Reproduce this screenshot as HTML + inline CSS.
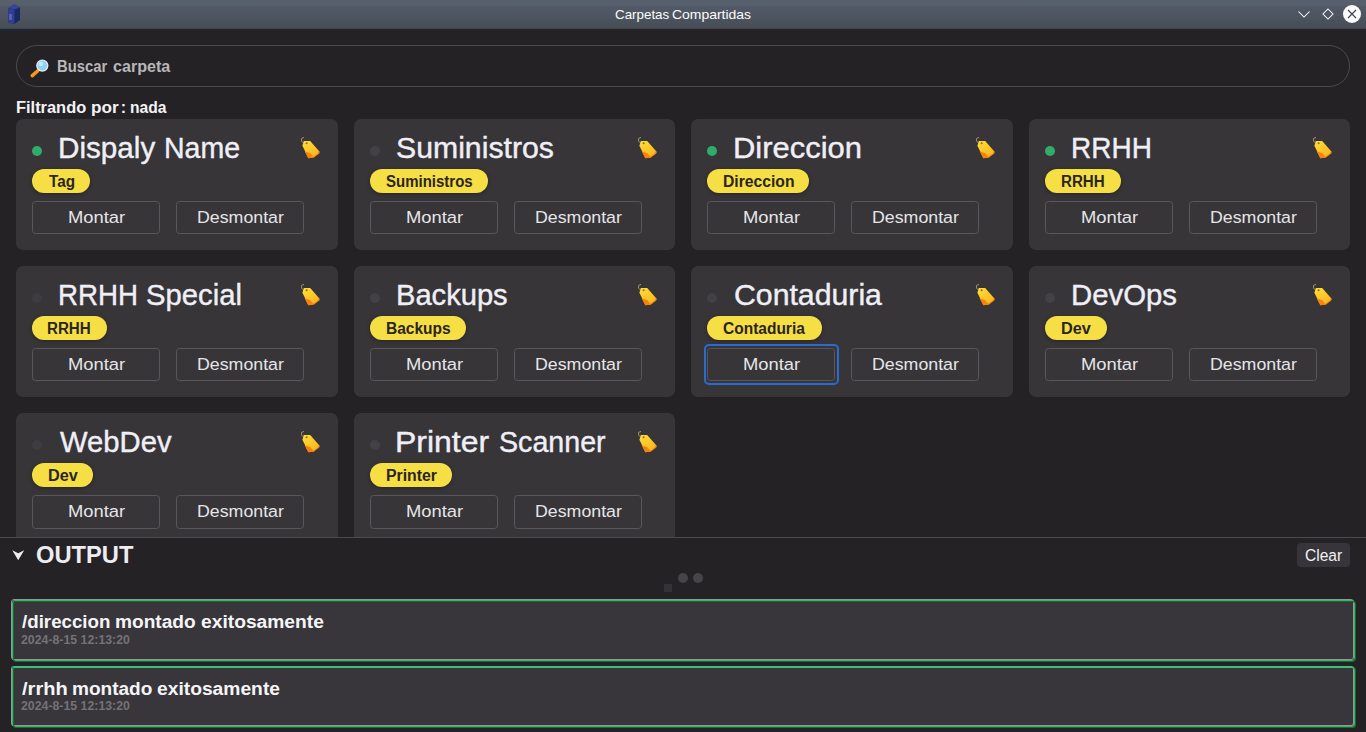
<!DOCTYPE html>
<html lang="es">
<head>
<meta charset="utf-8">
<title>Carpetas Compartidas</title>
<style>
*{box-sizing:border-box;margin:0;padding:0}
html,body{width:1366px;height:732px;overflow:hidden;background:#242225;font-family:"Liberation Sans",sans-serif;color:#f2f2f4}
#win{position:relative;width:1366px;height:732px;overflow:hidden}
.t{position:absolute;white-space:nowrap;display:block;transform-origin:0 0}
#titlebar{position:absolute;left:0;top:0;width:1366px;height:29px;background:linear-gradient(#57616d 0,#565f6b 5px,#525966 7px,#4e5561 17px,#4a515b 21px,#484e58 28px,#4b4c53 28px,#3a3a40 29px)}
#search{position:absolute;left:16px;top:45px;width:1334px;height:42px;border:1px solid #4b494d;border-radius:21px}
.card{position:absolute;width:322px;height:131px;background:#373538;border-radius:7px}
.card .in{position:absolute;top:0;width:322px;height:131px}
.card .dot{position:absolute;left:15.8px;top:26.5px;width:10.3px;height:10.3px;border-radius:50%;background:#434145}
.card .dot.on{background:#2fae6b}
.card .dot.dim{background:#3e3c40}
.card .tag{position:absolute;left:15.7px;top:50.3px;height:24px;border-radius:12px;background:#f5df45;box-shadow:0 1px 4px rgba(0,0,0,.3)}
.card .btn{position:absolute;top:82px;width:128px;height:33px;border:1px solid #59575b;border-radius:3.5px}
.card .btn .t{margin:-1px 0 0 -1px}
.card .b1{left:16px}.card .b2{left:160px}
.card .ring{position:absolute;left:13px;top:78px;width:135px;height:41px;border:2px solid #2a6bd0;border-radius:5px}
.card .ico{position:absolute;right:15px;top:16px;width:24px;height:24px}
#out{position:absolute;left:0;top:537px;width:1366px;height:195px;background:#242225;border-top:1px solid #4c4a4e}
#clear{position:absolute;left:1297px;top:543px;width:53px;height:24px;border-radius:4px;background:#373539}
.msgbg{position:absolute;left:12px;width:1343px;background:#38363a;border-radius:3px}
.mb{position:absolute;width:1343px;border:1px solid;border-radius:3px}
.mb.a{left:11px;border-color:#9b939b}.mb.b{left:12px;border-color:#3db36f}.mb.c{left:13px;border-color:#126e2d}
.sq{position:absolute;left:664px;top:584px;width:8px;height:8px;background:#343236}
.sd{position:absolute;top:573px;width:10px;height:10px;border-radius:50%;background:#464448}
</style>
</head>
<body>
<svg width="0" height="0" style="position:absolute">
<defs>
<linearGradient id="tg" x1="0" y1="0" x2="0.6" y2="1"><stop offset="0" stop-color="#ffdf3a"/><stop offset="1" stop-color="#fbb81e"/></linearGradient>
<g id="tagico">
<polygon points="6.2,15.5 9.3,23.2 14.7,22.7 20.6,18.2 12,14" fill="#f58a12"/>
<polygon points="4.8,6.1 11.2,6.1 20.8,17.1 13.6,22 8.6,21.2 3.4,10.7" fill="url(#tg)"/>
<polygon points="5.6,16.2 9.3,23.2 14.7,22.6 11.4,18.2" fill="#f6820f"/><polygon points="19.4,16.4 20.9,17.2 18.6,19.4" fill="#f6820f"/><circle cx="7.6" cy="8.2" r="1" fill="#8a6a14"/>
<path d="M5,2.4 L2.6,3.4 L2.6,6.4 L4.4,7.8" fill="none" stroke="#c9b58a" stroke-width="0.7"/>
</g>
</defs>
</svg>
<div id="win">
<div id="titlebar">
<svg style="position:absolute;left:7px;top:3px" width="14" height="22" viewBox="0 0 14 22"><polygon points="1.5,5 7,1.5 13,4.5 13,17 7.5,21 1.5,19.5" fill="#1c295c"/><polygon points="1.5,5 7.5,6.5 7.5,21 1.5,19.5" fill="#303e98"/><polygon points="1.5,5 7,1.5 13,4.5 7.5,6.5" fill="#36449e"/><rect x="2.2" y="11" width="2.6" height="6" fill="#5a67b8"/></svg>
<span class="t " style="left:614.67px;top:7.00px;font-size:13.33px;line-height:15px;font-weight:normal;color:#fcfcfc;transform:scaleX(1.0022);">Carpetas</span> <span class="t " style="left:672.25px;top:7.00px;font-size:13.33px;line-height:15px;font-weight:normal;color:#fcfcfc;transform:scaleX(1.0449);">Compartidas</span>
<svg style="position:absolute;left:1292px;top:0" width="74" height="28" viewBox="1292 0 74 28"><path d="M1298.5,11.5 L1304,17 L1309.5,11.5" fill="none" stroke="#fcfcfc" stroke-width="1.05"/><path d="M1328,9 L1333,14 L1328,19 L1323,14 Z" fill="none" stroke="#fcfcfc" stroke-width="1.05"/><circle cx="1352" cy="14" r="9" fill="#fcfcfc"/><path d="M1348,10 L1356,18 M1356,10 L1348,18" stroke="#3b4049" stroke-width="1.1"/></svg>
</div>
<div style="position:absolute;left:0;top:29px;width:32px;height:3px;background:#20242e"></div>
<div id="search">
<svg style="position:absolute;left:12px;top:11px" width="22" height="22" viewBox="28 56 22 22"><path d="M31.3,74.6 L36.6,70" stroke="#f7941d" stroke-width="3.6" stroke-linecap="round"/><circle cx="41.3" cy="64.6" r="5.5" fill="#8fd3f7" stroke="#e3eaee" stroke-width="1.3"/><circle cx="39.9" cy="63" r="2.2" fill="#c4e9fb"/></svg>
</div>
<span class="t " style="left:57.32px;top:58.00px;font-size:16px;line-height:17px;font-weight:bold;color:#b7b6b9;transform:scaleX(0.9252);">Buscar</span> <span class="t " style="left:113.27px;top:58.00px;font-size:16px;line-height:17px;font-weight:bold;color:#b7b6b9;transform:scaleX(1.0053);">carpeta</span>
<span class="t " style="left:16.21px;top:99.00px;font-size:16px;line-height:17px;font-weight:bold;color:#f4f4f6;transform:scaleX(1.0256);">Filtrando</span> <span class="t " style="left:90.73px;top:99.00px;font-size:16px;line-height:17px;font-weight:bold;color:#f4f4f6;transform:scaleX(1.0714);">por</span> <span class="t " style="left:120.70px;top:99.00px;font-size:16px;line-height:17px;font-weight:bold;color:#f4f4f6;transform:scaleX(1);">:</span> <span class="t " style="left:129.62px;top:99.00px;font-size:16px;line-height:17px;font-weight:bold;color:#f4f4f6;transform:scaleX(0.9768);">nada</span>
<div id="cards">
<div class="card" style="left:16px;top:119px;width:322px"><svg class="ico" viewBox="0 0 24 24"><use href="#tagico"/></svg><div class="in" style="left:0px"><span class="dot on"></span><span class="t " style="left:41.68px;top:12.00px;font-size:29.33px;line-height:33px;font-weight:normal;color:#f0eff6;transform:scaleX(1.0109);-webkit-text-stroke:0.4px #f0eff6;">Dispaly</span> <span class="t " style="left:148.27px;top:12.00px;font-size:29.33px;line-height:33px;font-weight:normal;color:#f0eff6;transform:scaleX(0.9725);-webkit-text-stroke:0.4px #f0eff6;">Name</span><div class="tag" style="left:15.7px;width:58.6px"><span class="t " style="left:17.38px;top:4.00px;font-size:16px;line-height:17px;font-weight:bold;color:#2b2521;transform:scaleX(0.9537);">Tag</span></div><div class="btn b1"><span class="t " style="left:35.77px;top:6.00px;font-size:17.33px;line-height:20px;font-weight:normal;color:#e6e5e8;transform:scaleX(1.0591);">Montar</span></div><div class="btn b2"><span class="t " style="left:20.91px;top:6.00px;font-size:17.33px;line-height:20px;font-weight:normal;color:#e6e5e8;transform:scaleX(1.025);">Desmontar</span></div></div></div>
<div class="card" style="left:353.8px;top:119px;width:321.4px"><svg class="ico" viewBox="0 0 24 24"><use href="#tagico"/></svg><div class="in" style="left:0.2px"><span class="dot"></span><span class="t " style="left:42.16px;top:12.00px;font-size:29.33px;line-height:33px;font-weight:normal;color:#f0eff6;transform:scaleX(1.0305);-webkit-text-stroke:0.4px #f0eff6;">Suministros</span><div class="tag" style="left:16.4px;width:117.5px"><span class="t " style="left:16.09px;top:4.00px;font-size:16px;line-height:17px;font-weight:bold;color:#2b2521;transform:scaleX(0.9368);">Suministros</span></div><div class="btn b1"><span class="t " style="left:35.77px;top:6.00px;font-size:17.33px;line-height:20px;font-weight:normal;color:#e6e5e8;transform:scaleX(1.0591);">Montar</span></div><div class="btn b2"><span class="t " style="left:20.91px;top:6.00px;font-size:17.33px;line-height:20px;font-weight:normal;color:#e6e5e8;transform:scaleX(1.025);">Desmontar</span></div></div></div>
<div class="card" style="left:691px;top:119px;width:322px"><svg class="ico" viewBox="0 0 24 24"><use href="#tagico"/></svg><div class="in" style="left:0px"><span class="dot on"></span><span class="t " style="left:41.58px;top:12.00px;font-size:29.33px;line-height:33px;font-weight:normal;color:#f0eff6;transform:scaleX(1.0549);-webkit-text-stroke:0.4px #f0eff6;">Direccion</span><div class="tag" style="left:15.7px;width:102.1px"><span class="t " style="left:15.86px;top:4.00px;font-size:16px;line-height:17px;font-weight:bold;color:#2b2521;transform:scaleX(0.9804);">Direccion</span></div><div class="btn b1"><span class="t " style="left:35.77px;top:6.00px;font-size:17.33px;line-height:20px;font-weight:normal;color:#e6e5e8;transform:scaleX(1.0591);">Montar</span></div><div class="btn b2"><span class="t " style="left:20.91px;top:6.00px;font-size:17.33px;line-height:20px;font-weight:normal;color:#e6e5e8;transform:scaleX(1.025);">Desmontar</span></div></div></div>
<div class="card" style="left:1028.8px;top:119px;width:321.4px"><svg class="ico" viewBox="0 0 24 24"><use href="#tagico"/></svg><div class="in" style="left:0.2px"><span class="dot on"></span><span class="t " style="left:42.31px;top:12.00px;font-size:29.33px;line-height:33px;font-weight:normal;color:#f0eff6;transform:scaleX(0.9545);-webkit-text-stroke:0.4px #f0eff6;">RRHH</span><div class="tag" style="left:16.4px;width:75.7px"><span class="t " style="left:15.60px;top:4.00px;font-size:16px;line-height:17px;font-weight:bold;color:#2b2521;transform:scaleX(0.9455);">RRHH</span></div><div class="btn b1"><span class="t " style="left:35.77px;top:6.00px;font-size:17.33px;line-height:20px;font-weight:normal;color:#e6e5e8;transform:scaleX(1.0591);">Montar</span></div><div class="btn b2"><span class="t " style="left:20.91px;top:6.00px;font-size:17.33px;line-height:20px;font-weight:normal;color:#e6e5e8;transform:scaleX(1.025);">Desmontar</span></div></div></div>
<div class="card" style="left:16px;top:266px;width:322px"><svg class="ico" viewBox="0 0 24 24"><use href="#tagico"/></svg><div class="in" style="left:0px"><span class="dot dim"></span><span class="t " style="left:41.84px;top:12.00px;font-size:29.33px;line-height:33px;font-weight:normal;color:#f0eff6;transform:scaleX(0.9445);-webkit-text-stroke:0.4px #f0eff6;">RRHH</span> <span class="t " style="left:129.69px;top:12.00px;font-size:29.33px;line-height:33px;font-weight:normal;color:#f0eff6;transform:scaleX(0.9974);-webkit-text-stroke:0.4px #f0eff6;">Special</span><div class="tag" style="left:15.7px;width:75.7px"><span class="t " style="left:15.60px;top:4.00px;font-size:16px;line-height:17px;font-weight:bold;color:#2b2521;transform:scaleX(0.9455);">RRHH</span></div><div class="btn b1"><span class="t " style="left:35.77px;top:6.00px;font-size:17.33px;line-height:20px;font-weight:normal;color:#e6e5e8;transform:scaleX(1.0591);">Montar</span></div><div class="btn b2"><span class="t " style="left:20.91px;top:6.00px;font-size:17.33px;line-height:20px;font-weight:normal;color:#e6e5e8;transform:scaleX(1.025);">Desmontar</span></div></div></div>
<div class="card" style="left:353.8px;top:266px;width:321.4px"><svg class="ico" viewBox="0 0 24 24"><use href="#tagico"/></svg><div class="in" style="left:0.2px"><span class="dot"></span><span class="t " style="left:41.73px;top:12.00px;font-size:29.33px;line-height:33px;font-weight:normal;color:#f0eff6;transform:scaleX(0.9928);-webkit-text-stroke:0.4px #f0eff6;">Backups</span><div class="tag" style="left:16.4px;width:95.5px"><span class="t " style="left:15.87px;top:4.00px;font-size:16px;line-height:17px;font-weight:bold;color:#2b2521;transform:scaleX(0.9679);">Backups</span></div><div class="btn b1"><span class="t " style="left:35.77px;top:6.00px;font-size:17.33px;line-height:20px;font-weight:normal;color:#e6e5e8;transform:scaleX(1.0591);">Montar</span></div><div class="btn b2"><span class="t " style="left:20.91px;top:6.00px;font-size:17.33px;line-height:20px;font-weight:normal;color:#e6e5e8;transform:scaleX(1.025);">Desmontar</span></div></div></div>
<div class="card" style="left:691px;top:266px;width:322px"><svg class="ico" viewBox="0 0 24 24"><use href="#tagico"/></svg><div class="in" style="left:0px"><span class="dot"></span><span class="t " style="left:42.58px;top:12.00px;font-size:29.33px;line-height:33px;font-weight:normal;color:#f0eff6;transform:scaleX(1.0309);-webkit-text-stroke:0.4px #f0eff6;">Contaduria</span><div class="tag" style="left:15.7px;width:115.6px"><span class="t " style="left:16.79px;top:4.00px;font-size:16px;line-height:17px;font-weight:bold;color:#2b2521;transform:scaleX(0.9688);">Contaduria</span></div><div class="ring"></div><div class="btn b1"><span class="t " style="left:35.77px;top:6.00px;font-size:17.33px;line-height:20px;font-weight:normal;color:#e6e5e8;transform:scaleX(1.0591);">Montar</span></div><div class="btn b2"><span class="t " style="left:20.91px;top:6.00px;font-size:17.33px;line-height:20px;font-weight:normal;color:#e6e5e8;transform:scaleX(1.025);">Desmontar</span></div></div></div>
<div class="card" style="left:1028.8px;top:266px;width:321.4px"><svg class="ico" viewBox="0 0 24 24"><use href="#tagico"/></svg><div class="in" style="left:0.2px"><span class="dot"></span><span class="t " style="left:42.21px;top:12.00px;font-size:29.33px;line-height:33px;font-weight:normal;color:#f0eff6;transform:scaleX(1.0006);-webkit-text-stroke:0.4px #f0eff6;">DevOps</span><div class="tag" style="left:16.4px;width:61.4px"><span class="t " style="left:16.02px;top:4.00px;font-size:16px;line-height:17px;font-weight:bold;color:#2b2521;transform:scaleX(1.0154);">Dev</span></div><div class="btn b1"><span class="t " style="left:35.77px;top:6.00px;font-size:17.33px;line-height:20px;font-weight:normal;color:#e6e5e8;transform:scaleX(1.0591);">Montar</span></div><div class="btn b2"><span class="t " style="left:20.91px;top:6.00px;font-size:17.33px;line-height:20px;font-weight:normal;color:#e6e5e8;transform:scaleX(1.025);">Desmontar</span></div></div></div>
<div class="card" style="left:16px;top:413px;width:322px"><svg class="ico" viewBox="0 0 24 24"><use href="#tagico"/></svg><div class="in" style="left:0px"><span class="dot dim"></span><span class="t " style="left:43.60px;top:12.00px;font-size:29.33px;line-height:33px;font-weight:normal;color:#f0eff6;transform:scaleX(0.9961);-webkit-text-stroke:0.4px #f0eff6;">WebDev</span><div class="tag" style="left:15.7px;width:61.4px"><span class="t " style="left:16.02px;top:4.00px;font-size:16px;line-height:17px;font-weight:bold;color:#2b2521;transform:scaleX(1.0154);">Dev</span></div><div class="btn b1" style="height:33.7px"><span class="t " style="left:35.77px;top:6.00px;font-size:17.33px;line-height:20px;font-weight:normal;color:#e6e5e8;transform:scaleX(1.0591);">Montar</span></div><div class="btn b2" style="height:33.7px"><span class="t " style="left:20.91px;top:6.00px;font-size:17.33px;line-height:20px;font-weight:normal;color:#e6e5e8;transform:scaleX(1.025);">Desmontar</span></div></div></div>
<div class="card" style="left:353.8px;top:413px;width:321.4px"><svg class="ico" viewBox="0 0 24 24"><use href="#tagico"/></svg><div class="in" style="left:0.2px"><span class="dot"></span><span class="t " style="left:41.51px;top:12.00px;font-size:29.33px;line-height:33px;font-weight:normal;color:#f0eff6;transform:scaleX(1.0887);-webkit-text-stroke:0.4px #f0eff6;">Printer</span> <span class="t " style="left:144.81px;top:12.00px;font-size:29.33px;line-height:33px;font-weight:normal;color:#f0eff6;transform:scaleX(0.9761);-webkit-text-stroke:0.4px #f0eff6;">Scanner</span><div class="tag" style="left:16.4px;width:82px"><span class="t " style="left:15.45px;top:4.00px;font-size:16px;line-height:17px;font-weight:bold;color:#2b2521;transform:scaleX(0.9884);">Printer</span></div><div class="btn b1" style="height:33.7px"><span class="t " style="left:35.77px;top:6.00px;font-size:17.33px;line-height:20px;font-weight:normal;color:#e6e5e8;transform:scaleX(1.0591);">Montar</span></div><div class="btn b2" style="height:33.7px"><span class="t " style="left:20.91px;top:6.00px;font-size:17.33px;line-height:20px;font-weight:normal;color:#e6e5e8;transform:scaleX(1.025);">Desmontar</span></div></div></div>
</div>
<div id="out"></div>
<svg style="position:absolute;left:10px;top:548px" width="16" height="14" viewBox="10 548 16 14"><path d="M12.3,550.2 L18.2,553.2 L24.2,550.2 L18.2,560.2 Z" fill="#ededf0"/></svg>
<span class="t " style="left:35.86px;top:541.00px;font-size:24px;line-height:27px;font-weight:bold;color:#ededf0;transform:scaleX(0.987);">OUTPUT</span>
<div id="clear"></div>
<span class="t " style="left:1304.87px;top:545.00px;font-size:17.33px;line-height:20px;font-weight:normal;color:#f2f2f4;transform:scaleX(0.8984);">Clear</span>
<div class="sq"></div><div class="sd" style="left:678px"></div><div class="sd" style="left:693px"></div>
<div class="msgbg" style="top:600px;height:61px"></div>
<div class="mb a" style="top:599px;height:61px"></div><div class="mb b" style="top:600px;height:61px"></div><div class="mb c" style="top:601px;height:61px"></div>
<div class="msgbg" style="top:666px;height:61px"></div>
<div class="mb a" style="top:666px;height:60px;border-top-color:#3cbf7a"></div><div class="mb b" style="top:667px;height:60px;border-top-color:#3cbf7a"></div><div class="mb c" style="top:667px;height:61px;border-top-color:transparent"></div>
<span class="t " style="left:21.90px;top:611.00px;font-size:18.67px;line-height:21px;font-weight:bold;color:#f5f5f7;transform:scaleX(1.0036);">/direccion</span> <span class="t " style="left:114.51px;top:611.00px;font-size:18.67px;line-height:21px;font-weight:bold;color:#f5f5f7;transform:scaleX(1.0241);">montado</span> <span class="t " style="left:201.00px;top:611.00px;font-size:18.67px;line-height:21px;font-weight:bold;color:#f5f5f7;transform:scaleX(1.0306);">exitosamente</span><span class="t " style="left:20.72px;top:633.00px;font-size:12px;line-height:14px;font-weight:bold;color:#747277;transform:scaleX(1.0265);">2024-8-15 12:13:20</span><span class="t " style="left:21.90px;top:678.00px;font-size:18.67px;line-height:21px;font-weight:bold;color:#f5f5f7;transform:scaleX(1.0763);">/rrhh</span> <span class="t " style="left:71.51px;top:678.00px;font-size:18.67px;line-height:21px;font-weight:bold;color:#f5f5f7;transform:scaleX(1.0202);">montado</span> <span class="t " style="left:157.40px;top:678.00px;font-size:18.67px;line-height:21px;font-weight:bold;color:#f5f5f7;transform:scaleX(1.0314);">exitosamente</span><span class="t " style="left:20.72px;top:699.00px;font-size:12px;line-height:14px;font-weight:bold;color:#747277;transform:scaleX(1.0265);">2024-8-15 12:13:20</span>
</div>
</body>
</html>
